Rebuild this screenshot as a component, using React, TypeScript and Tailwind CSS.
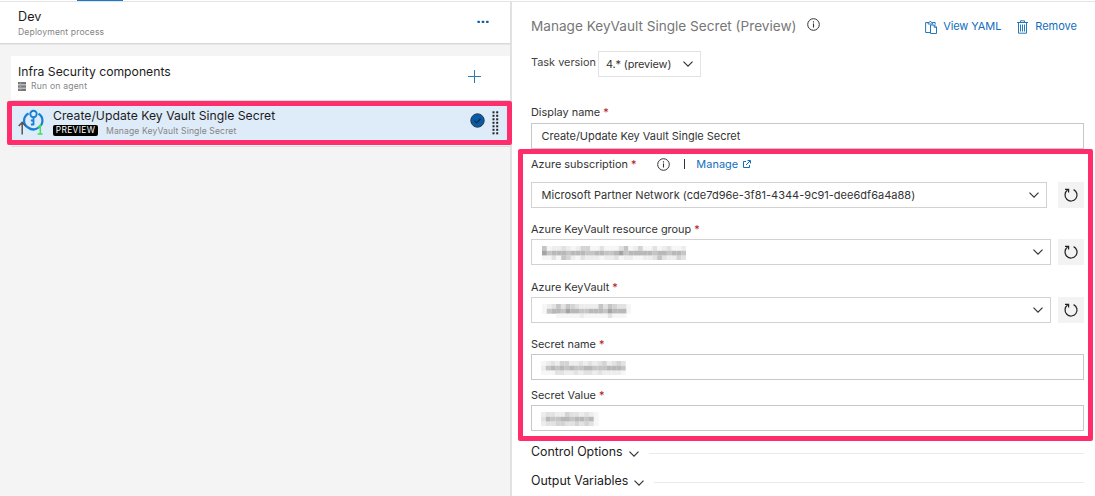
import React from "react";

const SHADES = ["transparent", "#f6f6f6", "#ededed", "#e2e2e2", "#d4d4d4", "#c5c5c5", "#b8b8b8", "#a4a4a4"];

function Redacted({ rows, size = 4.8 }: { rows: string[]; size?: number }) {
  const cols = rows[0].length;
  return (
    <svg className="mt-[2px]" width={cols * size} height={rows.length * 4.8} viewBox={`0 0 ${cols} ${rows.length}`} preserveAspectRatio="none" aria-hidden="true">
      {rows.map((row, y) =>
        row.split("").map((c, x) => <rect key={`${x}-${y}`} x={x} y={y} width="1.02" height="1.02" fill={SHADES[Number(c)]} />),
      )}
    </svg>
  );
}

function Chevron({ className = "" }: { className?: string }) {
  return (
    <svg className={`shrink-0 ${className}`} width="10" height="6" viewBox="0 0 10 6" fill="none" stroke="#333" strokeWidth="1.2">
      <path d="M.5 .6 5 5.1 9.500 .6" />
    </svg>
  );
}

function Info() {
  return (
    <svg className="shrink-0" width="13" height="13" viewBox="0 0 13 13" fill="none" stroke="#333">
      <circle cx="6.500" cy="6.500" r="5.800" />
      <path d="M6.500 5.400v4.200M6.500 3.300v1.200" strokeWidth="1.100" />
    </svg>
  );
}

function Label({ text, className = "" }: { text: string; className?: string }) {
  return (
    <div className={`flex h-4 items-center text-[10.9px] leading-4 whitespace-nowrap text-[#333] ${className}`}>
      {text}
      <span className="ml-[3px] text-[#b5121b]">*</span>
    </div>
  );
}

function Refresh() {
  return (
    <button className="flex h-[26px] w-[26px] shrink-0 items-center justify-center bg-[#f3f3f3]">
      <svg width="16" height="16" viewBox="0 0 16 16" fill="none" stroke="#222" strokeWidth="1.200">
        <path d="M10.600 2.600A6 6 0 1 1 4.600 3.100" />
        <path d="M2 2.300h3.600v3.300" />
      </svg>
    </button>
  );
}

function Select({ children, width }: { children: React.ReactNode; width: string }) {
  return (
    <div className="flex items-center justify-between">
      <div className={`flex h-[26px] items-center justify-between border border-[#d2d2d2] bg-white pr-[7px] pl-[9.5px] ${width}`}>
        {children}
        <Chevron />
      </div>
      <Refresh />
    </div>
  );
}

function Section({ title }: { title: string }) {
  return (
    <div className="flex h-[17px] items-center text-[12.4px] tracking-[-0.01px] whitespace-nowrap text-[#222]">
      {title}
      <Chevron className="mt-[3px] ml-[6px]" />
      <div className="mt-[2px] ml-[10px] h-px flex-1 bg-[#ebebeb]" />
    </div>
  );
}

function TaskIcon() {
  return (
    <svg className="mt-[3px] shrink-0" width="26" height="26" viewBox="0 0 26 26" fill="none">
      <path d="M10.600 4.400A8 8 0 0 0 10 18.500Q15.500 22.500 20.500 18.500A8 8 0 0 0 20.500 4.700" stroke="#1580d8" strokeWidth="2.200" />
      <circle cx="15.500" cy="5" r="3.200" stroke="#1580d8" strokeWidth="1.900" />
      <path d="M15.500 8.300v8M15.500 11.500h-2.600M15.500 15.500h-2.600" stroke="#1580d8" strokeWidth="1.800" />
      <path d="M4.200 25.500V13.500M.7 17 4.200 13.400 7.700 17" stroke="#555" strokeWidth="1.500" />
      <path d="M20 18.500 22.300 16.500v8M19.600 25h5" stroke="#43e052" strokeWidth="1.500" />
    </svg>
  );
}

function Pipeline() {
  return (
    <aside className="flex w-[510px] shrink-0 flex-col bg-[#f4f4f4]">
      <header className="flex h-[42px] shrink-0 justify-between border-b border-[#d8d8d8] bg-white pr-[21px] pl-[18px] shadow-[0_1px_0_#e8e8e8]">
        <div>
          <div className="mt-[6px] h-[17px] text-[12.6px] leading-[17px] tracking-[0.05px] text-[#1c1c1c]">Dev</div>
          <div className="h-3 text-[8.6px] leading-[14px] tracking-[0.14px] text-[#858585]">Deployment process</div>
        </div>
        <svg className="mt-[18px]" width="12" height="4" viewBox="0 0 12 4" fill="#0a5fa8">
          <rect x=".5" y=".7" width="2.400" height="2.400" rx=".6" />
          <rect x="4.800" y=".7" width="2.400" height="2.400" rx=".6" />
          <rect x="9.100" y=".7" width="2.400" height="2.400" rx=".6" />
        </svg>
      </header>
      <section className="mt-[12px] ml-[11px] flex h-[45px] shrink-0 justify-between border-b border-[#dedede] bg-white pr-[29px] pl-[7px]">
        <div>
          <div className="mt-[7px] h-[17px] text-[12.2px] leading-[17px] text-[#1c1c1c]">Infra Security components</div>
          <div className="flex h-3 items-center text-[8.6px] tracking-[0.2px] text-[#858585]">
            <svg className="mr-[5px]" width="8" height="9" viewBox="0 0 8 9">
              <path d="M0 0h8v2.400H0zM0 3.300h8v2.400H0zM0 6.600h8V9H0z" fill="#777" />
              <path d="M1.300 1.200h2M1.300 4.500h2M1.300 7.800h2" stroke="#bbb" strokeWidth=".6" />
            </svg>
            Run on agent
          </div>
        </div>
        <svg className="mt-[14px]" width="13" height="13" viewBox="0 0 13 13" stroke="#2a7ab4" fill="none">
          <path d="M6.500 0v13M0 6.500h13" />
        </svg>
      </section>
      <div className="ml-[7px] w-[505px] shrink-0">
        <div className="relative z-10 flex h-[44px] rounded-[2px] border-[5px] border-[#ff2d6c] bg-[#deebf9] pr-[8px] pl-[6px]">
          <TaskIcon />
          <div className="ml-[9px] flex-1 whitespace-nowrap">
            <div className="mt-[2px] h-4 text-[12.2px] leading-4 tracking-[0.02px] text-[#1c1c1c]">Create/Update Key Vault Single Secret</div>
            <div className="flex h-[12px] items-center">
              <span className="mt-px flex h-[11px] w-[45px] items-center justify-center rounded-[2px] bg-black text-[8.4px] leading-[11px] tracking-[0.35px] text-white">PREVIEW</span>
              <span className="mt-px ml-[8px] text-[8.6px] leading-3 tracking-[0.12px] text-[#858585]">Manage KeyVault Single Secret</span>
            </div>
          </div>
          <svg className="mt-[6.5px] -mr-px" width="15" height="15" viewBox="0 0 15 15" fill="none">
            <circle cx="7.500" cy="7.500" r="6.700" fill="#075ca8" stroke="#273a4c" />
            <path d="m4.400 7.700 2.200 2.200 4-4.200" stroke="#172b3e" strokeWidth="1.300" />
          </svg>
          <svg className="mt-[5px] ml-[8px]" width="7" height="24" viewBox="0 0 7 24" fill="#222">
            {[0, 1, 2, 3, 4, 5, 6].map((i) => (
              <React.Fragment key={i}>
                <rect x=".5" y={i * 3.5 + 0.3} width="2" height="2" />
                <rect x="4.200" y={i * 3.5 + 0.3} width="2" height="2" />
              </React.Fragment>
            ))}
          </svg>
        </div>
        <div className="mt-px ml-1 h-px w-[499px] bg-[#dddddd]" />
      </div>
    </aside>
  );
}

function Details() {
  return (
    <main className="min-w-0 flex-1 border-l-2 border-[#e1e1e1] bg-white pr-[11px] pl-[19px]">
      <div className="flex h-[49px] items-center whitespace-nowrap">
        <h1 className="text-[13.6px] text-[#777]">Manage KeyVault Single Secret (Preview)</h1>
        <div className="-mt-[5px] ml-[10px]"><Info /></div>
        <div className="ml-auto flex items-center pr-[7px] text-[11px] text-[#106ebe]">
          <svg width="12" height="14" viewBox="0 0 12 14" fill="none" stroke="#2479bd">
            <path d="M5 12.500H.6V2.500h2.600M7.600 2.500h2.600v2" />
            <path d="M3.100 4V2.500h1.200L5.400 1l1.100 1.500h1.200V4z" />
            <path d="M5.500 5h4l2 2v6.500h-6zM9.200 5v2.300h2.300" />
          </svg>
          <span className="ml-[6px] tracking-[-0.1px]">View YAML</span>
          <svg className="ml-[16px]" width="11" height="14" viewBox="0 0 11 14" fill="none" stroke="#2479bd">
            <path d="M0 2.500h11M3.500 2.300V.8h4v1.500M1.500 2.700v10.500h8V2.700M3.500 4.500v7M5.500 4.500v7M7.500 4.500v7" />
          </svg>
          <span className="ml-[7px]">Remove</span>
        </div>
      </div>
      <div className="flex h-[26px] items-center whitespace-nowrap">
        <span className="-mt-[3px] w-[67px] text-[10.9px] text-[#444]">Task version</span>
        <div className="flex h-[26px] w-[103px] items-center justify-between border border-[#e3e3e3] pr-[7px] pl-[7px] text-[10.9px] tracking-[-0.12px] text-[#333]">
          4.* (preview)
          <Chevron />
        </div>
      </div>
      <Label text="Display name" className="mt-[27px]" />
      <div className="mt-[3px] flex h-[26px] items-center border border-[#c8c8c8] pl-[9.5px] text-[11px] tracking-[-0.03px] text-[#333]">Create/Update Key Vault Single Secret</div>
      <div className="relative z-10 -mr-[9px] -ml-[13px] h-[292px] rounded-[2px] border-[5px] border-[#ff2d6c] pr-[4px] pl-[8px]">
        <div className="flex h-5 items-center">
          <Label text="Azure subscription" />
          <div className="mt-[1px] ml-[21px]"><Info /></div>
          <span className="ml-[14px] h-[10px] w-px bg-[#333]" />
          <span className="ml-[11px] text-[10.9px] tracking-[0.05px] text-[#106ebe]">Manage</span>
          <svg className="ml-[5px]" width="8" height="8" viewBox="0 0 8 8" fill="none" stroke="#106ebe">
            <path d="M3 1.500H.5v6h6V5M3 5l4-4M4.500.5h3v3" />
          </svg>
        </div>
        <div className="mt-[8px] text-[11px] tracking-[0.02px] whitespace-nowrap text-[#333]">
          <Select width="w-[516px]">Microsoft Partner Network (cde7d96e-3f81-4344-9c91-dee6df6a4a88)</Select>
        </div>
        <Label text="Azure KeyVault resource group" className="mt-[13px]" />
        <div className="mt-[2px]">
          <Select width="w-[520px]">
            <Redacted rows={["512232124411311135124113123112", "756665666556655675666665665665", "113154213222122312211223532243"]} />
          </Select>
        </div>
        <Label text="Azure KeyVault" className="mt-[14px]" />
        <div className="mt-[2px]">
          <Select width="w-[520px]">
            <Redacted size={4.7} rows={["1235354322225354331", "1566576655666576661", "0001111121111131110"]} />
          </Select>
        </div>
        <Label text="Secret name" className="mt-[13px]" />
        <div className="mt-[2px] flex h-[26px] items-center border border-[#c8c8c8] pl-[9px]">
          <Redacted size={4.7} rows={["123244223232342343", "256565655665556665", "111332232332322221"]} />
        </div>
        <Label text="Secret Value" className="mt-[7px]" />
        <div className="mt-[2px] flex h-[26px] items-center border border-[#c8c8c8] pl-[9px]">
          <Redacted rows={["233224332321", "365566566561", "233443343431"]} />
        </div>
      </div>
      <div className="mt-[3px] flex flex-col gap-3">
        <Section title="Control Options" />
        <Section title="Output Variables" />
      </div>
    </main>
  );
}

export default function App() {
  return (
    <div className="flex h-[496px] w-[1095px] flex-col overflow-hidden bg-white font-['Inter','Liberation_Sans',sans-serif]">
      <div className="h-[2px] shrink-0 border-b border-[#e4e4e4]">
        <div className="ml-[77px] h-px w-[46px] bg-[#1979ca]" />
      </div>
      <div className="flex min-h-0 flex-1">
        <Pipeline />
        <Details />
      </div>
    </div>
  );
}
